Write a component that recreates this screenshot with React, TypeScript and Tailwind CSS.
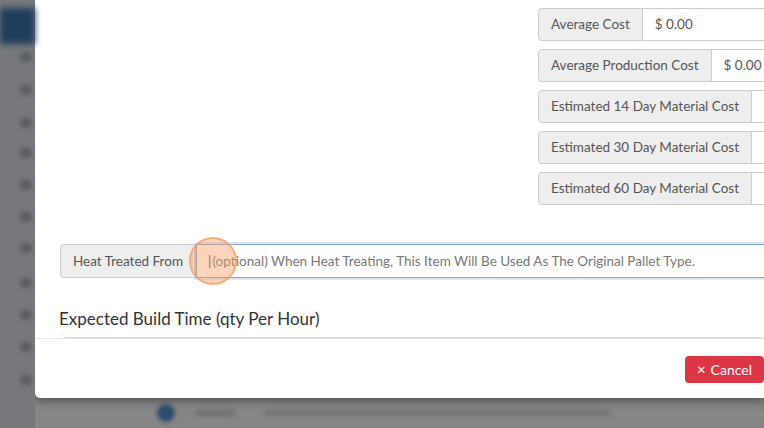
const COSTS = [
  { label: 'Average Cost', value: '$ 0.00' },
  { label: 'Average Production Cost', value: '$ 0.00' },
  { label: 'Estimated 14 Day Material Cost', value: '$ 0.00' },
  { label: 'Estimated 30 Day Material Cost', value: '$ 0.00' },
  { label: 'Estimated 60 Day Material Cost', value: '$ 0.00' },
]

const SIDE_DOTS = [57, 90, 123, 153, 185, 217, 248, 283, 315, 347, 380]

export default function App() {
  return (
    <div
      className="w-[764px] h-[428px] overflow-hidden bg-[#868686] flex text-[#555]"
      style={{ fontFamily: 'Lato, "Open Sans", sans-serif' }}
    >
      {/* Dimmed sidebar behind the modal */}
      <div className="w-[35px] shrink-0 bg-[#76787b] relative">
        <div className="mt-[8px] h-[36px] bg-[#1f3d5c] blur-[3px]" />
        {SIDE_DOTS.map((y) => (
          <div
            key={y}
            className="absolute left-[20px] w-[12px] h-[10px] rounded-full bg-[#5a5d61] blur-[2px]"
            style={{ top: y - 5 }}
          />
        ))}
      </div>

      <div className="flex-1 flex flex-col min-w-0">
        {/* Modal */}
        <div className="h-[398px] shrink-0 bg-white rounded-bl-[5px] flex flex-col shadow-[0_3px_9px_rgba(0,0,0,0.4)]">
          <div className="h-[338px] shrink-0 overflow-hidden pl-[25px]">
            <div className="flex flex-col gap-[8px] pt-[8px] pl-[478px]">
              {COSTS.map((c) => (
                <div key={c.label} className="flex h-[33px] w-[300px] text-[13.5px]">
                  <div className="flex items-center px-[12px] bg-[#eeeeee] border border-[#cccccc] rounded-l-[4px] whitespace-nowrap">
                    {c.label}
                  </div>
                  <div className="flex items-center px-[12px] border border-l-0 border-[#cccccc] flex-1 whitespace-nowrap">
                    {c.value}
                  </div>
                </div>
              ))}
            </div>

            <div className="flex h-[34px] mt-[39px] w-[720px] text-[13.5px]">
              <div className="flex items-center px-[12px] bg-[#eeeeee] border border-[#cccccc] rounded-l-[4px] whitespace-nowrap">
                Heat Treated From
              </div>
              <div className="relative flex-1 flex items-center pl-[11px] border border-[#7fa7d3] shadow-[0_0_0_2px_rgba(102,175,233,0.25)] whitespace-nowrap text-[#777]">
                <span className="text-[#333] mr-[1px]">|</span>
                (optional) When Heat Treating, This Item Will Be Used As The Original Pallet Type.
                <span className="absolute left-[-8px] top-[-8px] w-[48px] h-[48px] rounded-full bg-[rgba(247,160,105,0.45)] border-2 border-[rgba(240,150,90,0.6)]" />
              </div>
            </div>

            <div className="mt-[31px] text-[17px] text-[#333] leading-[20px] -ml-[1px]">
              Expected Build Time (qty Per Hour)
            </div>
            <div className="mt-[8px] ml-[2px] h-[20px] border border-[#d5d5d5] rounded-[4px]" />
          </div>

          <div className="flex-1 border-t border-[#e5e5e5] flex items-start justify-end pt-[17px]">
            <button className="h-[27px] px-[12px] rounded-[4px] bg-[#dc3545] text-white text-[14px] flex items-center gap-[5px]">
              <span className="text-[15px]">×</span>
              Cancel
            </button>
          </div>
        </div>

        {/* Dimmed page content under the modal */}
        <div className="flex-1 flex items-center pl-[122px] blur-[2px]">
          <div className="w-[18px] h-[18px] rounded-full bg-[#2e4b6b]" />
          <div className="ml-[20px] w-[40px] h-[6px] bg-[#6f6f6f]" />
          <div className="ml-[30px] w-[345px] h-[6px] bg-[#737373]" />
        </div>
      </div>
    </div>
  )
}
